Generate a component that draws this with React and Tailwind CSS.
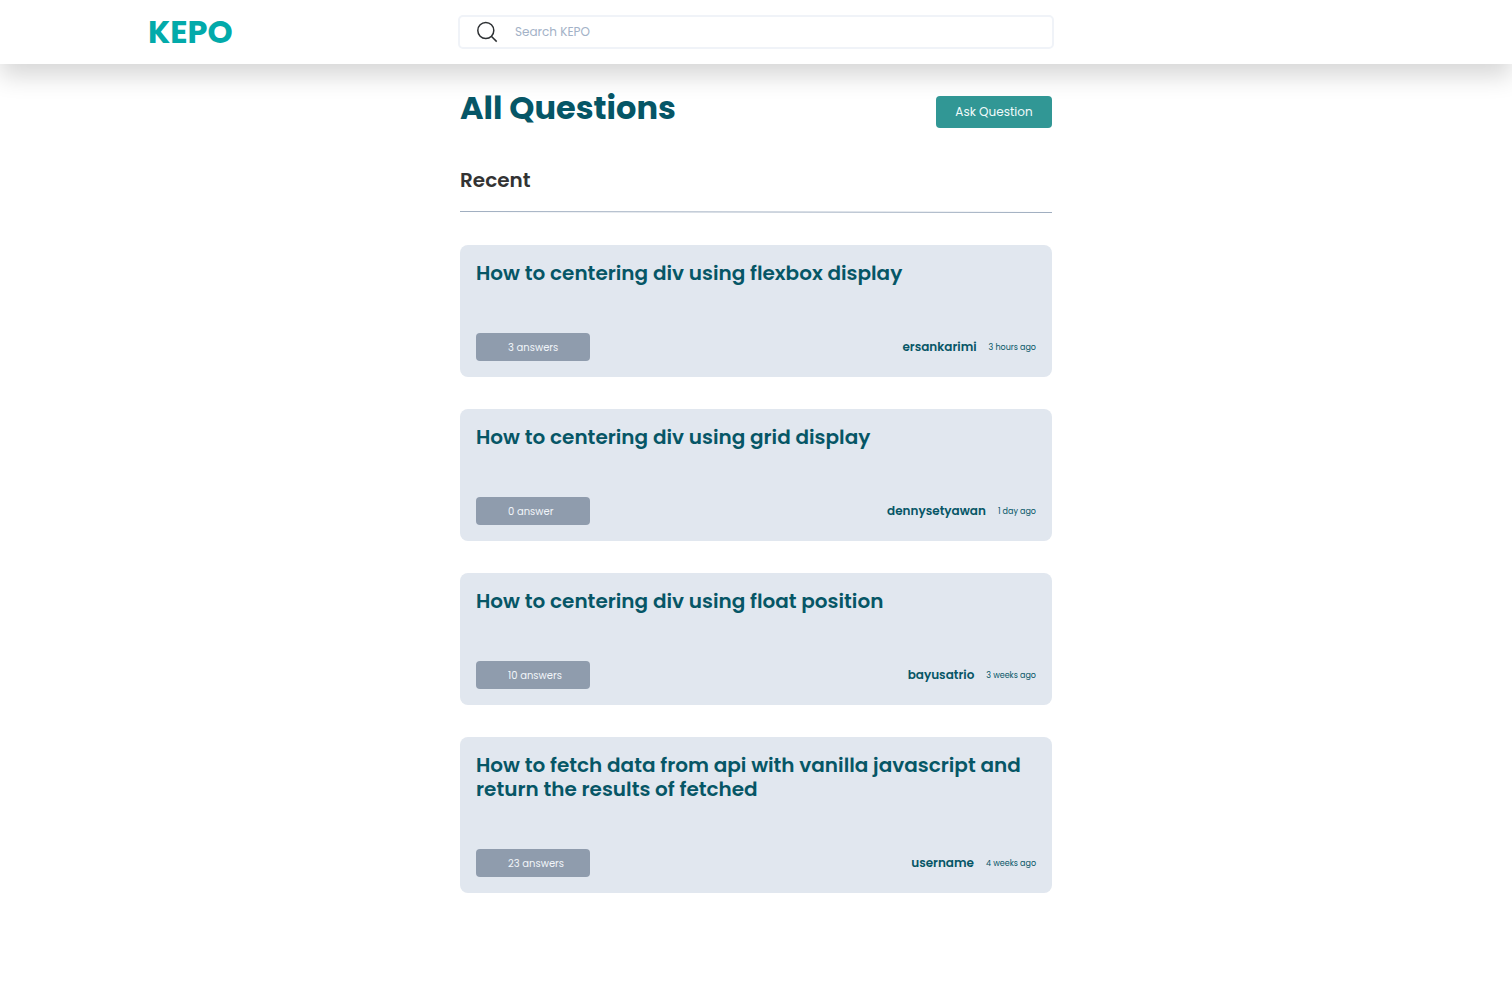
const questions = [
  { title: 'How to centering div using flexbox display', answers: '3 answers', author: 'ersankarimi', time: '3 hours ago' },
  { title: 'How to centering div using grid display', answers: '0 answer', author: 'dennysetyawan', time: '1 day ago' },
  { title: 'How to centering div using float position', answers: '10 answers', author: 'bayusatrio', time: '3 weeks ago' },
  {
    title: 'How to fetch data from api with vanilla javascript and return the results of fetched',
    answers: '23 answers',
    author: 'username',
    time: '4 weeks ago',
  },
];

function SearchIcon() {
  return (
    <svg className="size-6 shrink-0" viewBox="0 0 24 24" fill="none" stroke="#2d3033" strokeWidth="1.5" aria-hidden="true">
      <circle cx="10.8" cy="10.5" r="8" />
      <path d="M16.3 16.2 21.7 21.6" />
    </svg>
  );
}

function Header() {
  return (
    <header className="grid h-16 grid-cols-[1fr_minmax(0,596px)_1fr] items-center bg-white shadow-[0_12px_24px_rgba(0,0,0,0.16)]">
      <a href="#" className="pl-[148px] text-[32px] leading-10 font-bold text-[#02aaaa]">
        KEPO
      </a>
      <label className="flex h-[34px] items-center gap-4 rounded-[5px] border-2 border-[#f0f3f8] pl-[15px]">
        <SearchIcon />
        <input
          type="search"
          aria-label="Search KEPO"
          placeholder="Search KEPO"
          className="min-w-0 flex-1 bg-transparent text-xs text-[#2d3033] outline-none placeholder:text-[#a3b2c7]"
        />
      </label>
    </header>
  );
}

function QuestionCard({ title, answers, author, time }) {
  return (
    <article className="flex flex-col gap-12 rounded-lg bg-[#e1e7ef] p-4 text-[#065666]">
      <h3 className="text-xl leading-6 font-semibold">
        <a href="#">{title}</a>
      </h3>
      <div className="flex items-center justify-between">
        <span className="flex h-7 w-[114px] items-center rounded bg-[#8f9cad] pl-8 text-[10px] text-[#f1f5f9]">
          {answers}
        </span>
        <div className="flex items-center gap-3">
          <a href="#" className="text-xs font-semibold">
            {author}
          </a>
          <time className="pt-px text-[8px] leading-3">{time}</time>
        </div>
      </div>
    </article>
  );
}

export default function App() {
  return (
    <div className="min-h-screen bg-white font-['Poppins','Inter',sans-serif]">
      <Header />
      <main className="mx-auto max-w-[592px] pt-6 pb-16">
        <div className="flex items-end justify-between">
          <h1 className="text-[32px] leading-10 font-bold text-[#065666]">All Questions</h1>
          <button type="button" className="h-8 w-[116px] rounded bg-[#319795] text-xs text-[#f0fafa]">
            Ask Question
          </button>
        </div>
        <h2 className="mt-10 text-xl leading-6 font-semibold text-[#333333]">Recent</h2>
        <svg className="mt-[18px] block h-1 w-full" viewBox="0 0 592 4" preserveAspectRatio="none" aria-hidden="true">
          <path d="M0 1.5 592 2.5" stroke="#a0aec0" />
        </svg>
        <section className="mt-[31px] flex flex-col gap-8">
          {questions.map((question) => (
            <QuestionCard key={question.title} {...question} />
          ))}
        </section>
      </main>
    </div>
  );
}
